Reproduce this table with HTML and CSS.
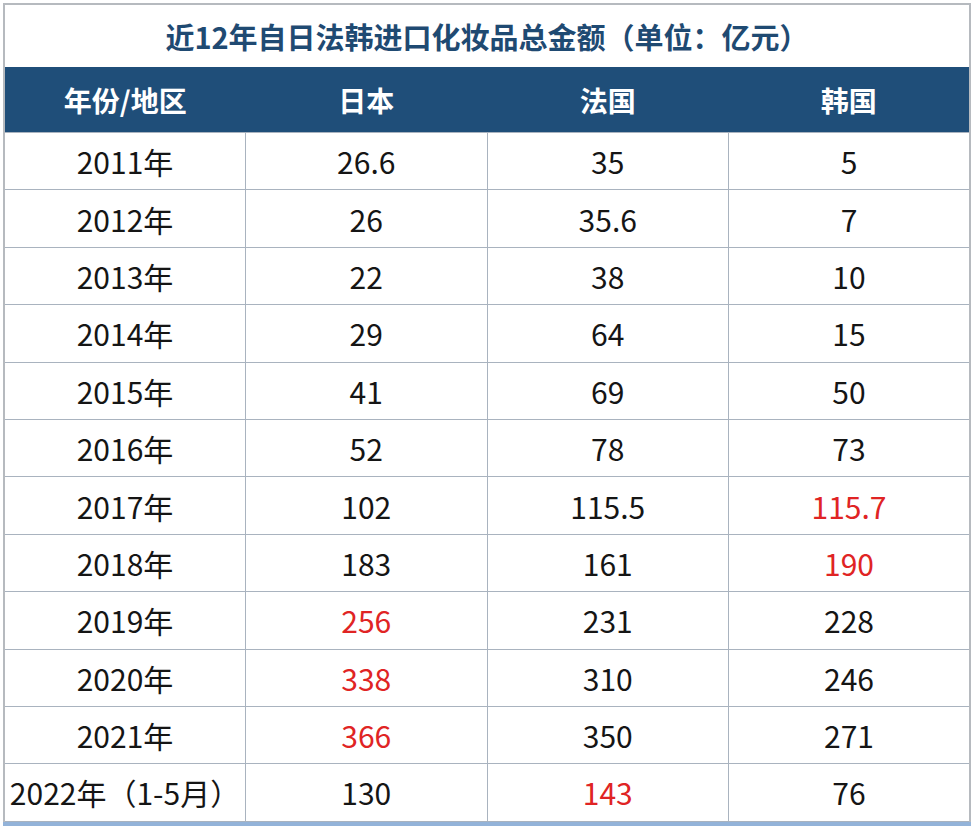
FILE: index.html
```html
<!DOCTYPE html>
<html lang="zh-CN">
<head>
<meta charset="utf-8">
<title>近12年自日法韩进口化妆品总金额</title>
<link rel="stylesheet" href="styles.css">
</head>
<body>
<div class="frame">
  <table class="data">
    <caption class="title">近12年自日法韩进口化妆品总金额（单位：亿元）</caption>
    <thead>
      <tr><th>年份/地区</th><th>日本</th><th>法国</th><th>韩国</th></tr>
    </thead>
    <tbody>
      <tr><td>2011年</td><td>26.6</td><td>35</td><td>5</td></tr>
      <tr><td>2012年</td><td>26</td><td>35.6</td><td>7</td></tr>
      <tr><td>2013年</td><td>22</td><td>38</td><td>10</td></tr>
      <tr><td>2014年</td><td>29</td><td>64</td><td>15</td></tr>
      <tr><td>2015年</td><td>41</td><td>69</td><td>50</td></tr>
      <tr><td>2016年</td><td>52</td><td>78</td><td>73</td></tr>
      <tr><td>2017年</td><td>102</td><td>115.5</td><td class="red">115.7</td></tr>
      <tr><td>2018年</td><td>183</td><td>161</td><td class="red">190</td></tr>
      <tr><td>2019年</td><td class="red">256</td><td>231</td><td>228</td></tr>
      <tr><td>2020年</td><td class="red">338</td><td>310</td><td>246</td></tr>
      <tr><td>2021年</td><td class="red">366</td><td>350</td><td>271</td></tr>
      <tr><td>2022年（1-5月）</td><td>130</td><td class="red">143</td><td>76</td></tr>
    </tbody>
  </table>
  <div class="strip"></div>
</div>
</body>
</html>
```
FILE: styles.css
```css
html, body {
  margin: 0;
  padding: 0;
  background: #ffffff;
}
body {
  font-family: "Noto Sans CJK SC", "Noto Sans", sans-serif;
  color: #151515;
}
.frame {
  padding: 3px 4px 0 3px;
  width: 968px;
  height: 826px;
  display: flex;
  flex-direction: column;
  overflow: hidden;
}
.data {
  width: 968px;
  border-collapse: collapse;
  table-layout: fixed;
  border-left: 2px solid #b6babf;
  border-right: 2px solid #b6babf;
}
.title {
  caption-side: top;
  height: 64px;
  line-height: 62px;
  box-sizing: border-box;
  border: 2px solid #b6babf;
  border-bottom: none;
  font-size: 29px;
  font-weight: 700;
  color: #1f4a72;
  text-align: center;
}
.data th {
  background: #1f4e79;
  color: #ffffff;
  font-size: 28px;
  font-weight: 700;
  height: 65px;
  padding: 0;
  text-align: center;
}
.data td {
  height: 56.4px;
  padding: 0;
  font-size: 30px;
  line-height: 1;
  text-align: center;
  border: 1.5px solid #a9b3bf;
  border-top: none;
}
.data tbody tr td {
  border-top: 1px solid #a9b3bf;
}
.data td:first-child { border-left: none; }
.data td:last-child { border-right: none; }
.data td.red { color: #e02424; }
.strip {
  height: 6px;
  background: #93b3d9;
}
```
